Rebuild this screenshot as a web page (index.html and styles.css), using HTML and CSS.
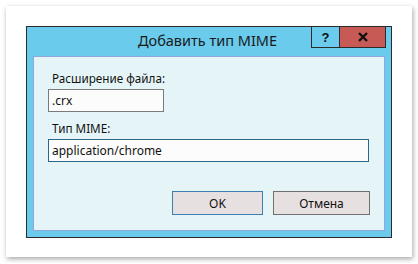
FILE: index.html
```html
<!DOCTYPE html>
<html lang="ru">
<head>
  <meta charset="UTF-8" />
  <title>Добавить тип MIME</title>
  <link rel="stylesheet" href="styles.css">
</head>
<body>

  <div class="card">
    <div class="window">
      <div class="titlebar">
        <span></span>
        <div class="title">Добавить тип MIME</div>
        <div class="caption-btns">
          <div class="help-btn">?</div>
          <div class="close-btn">
            <svg width="10" height="10" viewBox="0 0 10 10">
              <path d="M1 1 L9 9 M9 1 L1 9" stroke="#111" stroke-width="2.4" fill="none"/>
            </svg>
          </div>
        </div>
      </div>

      <div class="content">
        <label class="field-label">Расширение файла:</label>
        <input class="field short" value=".crx" />
        <label class="field-label second">Тип MIME:</label>
        <input class="field wide active" value="application/chrome" />

        <div class="actions">
          <button class="btn default">OK</button>
          <button class="btn cancel">Отмена</button>
        </div>
      </div>
    </div>
  </div>

</body>
</html>
```

FILE: styles.css
```css
body {
  margin: 0;
  padding: 6px;
  background: #fff;
  font-family: "Noto Sans", "Liberation Sans", sans-serif;
}
.card {
  width: 406px;
  height: 251px;
  box-sizing: border-box;
  padding: 20px;
  background: #fff;
  box-shadow: 1px 2px 5px rgba(0, 0, 0, 0.35);
}
.window {
  width: 366px;
  height: 212px;
  box-sizing: border-box;
  border: 1px solid #2b2b2b;
  background: #6acbec;
  padding: 0 6px 0 6px;
}
.titlebar {
  display: grid;
  grid-template-columns: 1fr auto 1fr;
  align-items: start;
  height: 29px;
  margin: 0 -6px;
}
.title {
  font-size: 14.5px;
  line-height: 27px;
  color: #1a1a1a;
  white-space: nowrap;
  margin-right: 3px;
}
.caption-btns {
  display: flex;
  justify-self: end;
  margin-top: -1px;
  margin-right: 5px;
}
.help-btn, .close-btn {
  height: 22px;
  box-sizing: border-box;
  display: flex;
  align-items: center;
  justify-content: center;
}
.help-btn {
  width: 28px;
  border: 1px solid #2b2b2b;
  border-right: none;
  font-family: "Liberation Sans", sans-serif;
  font-weight: bold;
  font-size: 13px;
  color: #111;
}
.close-btn {
  width: 47px;
  border: 1px solid #2b2b2b;
  background: #c75a55;
}
.content {
  height: 175px;
  box-sizing: border-box;
  border: 1px solid #8fa6de;
  background: #e5f5f7;
  padding: 13px 14px 0 14px;
}
.field-label {
  display: block;
  margin-left: 4px;
  font-size: 11.7px;
  line-height: 16px;
  color: #111;
}
.field-label.second {
  margin-top: 8px;
}
.field {
  display: block;
  margin-top: 3px;
  height: 23px;
  box-sizing: border-box;
  border: 1px solid #7a7a7a;
  background: #fcfcfc;
  padding: 0 3px;
  font-family: "Noto Sans", "Liberation Sans", sans-serif;
  font-size: 12px;
  color: #111;
  outline: none;
}
.field.short {
  width: 116px;
}
.field.wide {
  width: 321px;
}
.field.active {
  border-color: #2a6888;
}
.actions {
  display: flex;
  justify-content: flex-end;
  gap: 10px;
  margin-top: 29px;
}
.btn {
  height: 24px;
  box-sizing: border-box;
  border: 1px solid #707070;
  background: #e6e0e0;
  font-family: "Noto Sans", "Liberation Sans", sans-serif;
  font-size: 12px;
  color: #111;
  padding: 0;
}
.btn.default {
  width: 91px;
  border-color: #3c7fb1;
}
.btn.cancel {
  width: 97px;
}
```
